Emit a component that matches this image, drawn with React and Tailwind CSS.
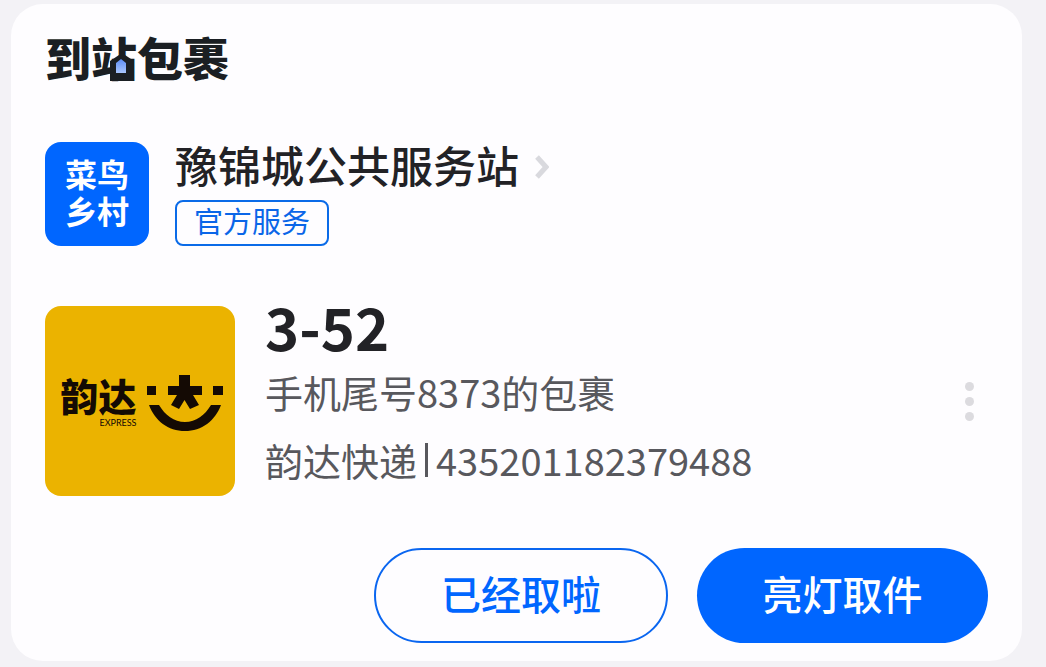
import React from 'react'

const parcel = {
  code: '3-52',
  note: '手机尾号8373的包裹',
  courier: '韵达快递',
  tracking: '435201182379488',
}

function HouseMark() {
  return (
    <svg viewBox="0 0 24 27" className="absolute left-[65px] top-[22px] w-6 h-[27px]" aria-hidden="true">
      <path d="M0 7 L9 1 H15 L24 7 V27 H0 Z" fill="#1b1f23" />
      <path d="M6 9 L11 5 L16 9 V19 H6 Z" fill="url(#window)" />
      <defs>
        <linearGradient id="window" x1="0" y1="0" x2="0" y2="1">
          <stop offset="0" stopColor="#5c8cf5" />
          <stop offset="1" stopColor="#a9c6fd" />
        </linearGradient>
      </defs>
    </svg>
  )
}

function StationLogo() {
  return (
    <div className="w-[104px] h-[104px] shrink-0 rounded-2xl bg-[#0066ff] text-white pb-1
      flex items-center justify-center">
      <p className="text-[32px] leading-[37px] font-bold">菜鸟<br />乡村</p>
    </div>
  )
}

function CourierLogo() {
  return (
    <div className="w-[190px] h-[190px] shrink-0 rounded-2xl bg-[#ebb300] text-[#140a04] pl-1 pt-1
      flex items-center justify-center gap-[9px]">
      <div className="flex flex-col items-end">
        <span className="text-[38px] leading-[36px] font-black">韵达</span>
        <span className="mt-1 font-['Lato'] text-[9px] leading-3">EXPRESS</span>
      </div>
      <svg viewBox="0 0 78 58" className="w-[78px] h-[58px]" fill="currentColor" aria-hidden="true">
        <rect x="1" y="12" width="9" height="9" />
        <rect x="67" y="12" width="10" height="9" />
        <path d="M33 1 H44 V12 H56 V21 H47 L53 31 L44 35 L38.500 26 L33 35 L25 31 L31 21 H22 V12 H33 Z" />
        <path d="M3 31 H13 C19 41 28 48 39 48 C50 48 59 41 65 31 H75 C69 47 56 57 39 57 C22 57 9 47 3 31 Z" />
      </svg>
    </div>
  )
}

export default function App() {
  return (
    <div className="min-h-screen bg-[#f3f2f6] pt-1 pr-6 pb-[7px] pl-[11px] font-['Noto_Sans_CJK_SC',sans-serif]">
      <main className="rounded-[32px] bg-[#fefdff] px-[34px] pt-7 pb-[18px] text-[#222226]">
        {/* Title */}
        <h1 className="relative w-fit text-[46px] leading-[48px] font-black text-[#1b1f23]">
          到站包裹
          <HouseMark />
        </h1>

        {/* Station */}
        <section className="mt-[62px] flex gap-[26px]">
          <StationLogo />
          <div className="flex flex-col items-start gap-[14px]">
            <a href="#station" className="flex items-center gap-4 text-[43px] leading-[44px] font-medium">
              豫锦城公共服务站
              <svg viewBox="0 0 14 24" className="mt-1.5 w-[14px] h-6" fill="none" stroke="#d9d9de" strokeWidth="5" aria-hidden="true">
                <path d="M2 2 L11 12 L2 22" />
              </svg>
            </a>
            <span className="h-[46px] rounded-lg border-2 border-[#0a6be8] px-[17px] text-[29px] leading-9 text-[#0a66e8]">
              官方服务
            </span>
          </div>
        </section>

        {/* Parcel */}
        <section className="mt-[60px] flex gap-[30px]">
          <CourierLogo />
          <div className="flex-1 text-[38px] leading-[68px] text-[#58585d]">
            <h2 className="mb-3 text-[58px] leading-10 font-bold text-[#222226]">{parcel.code}</h2>
            <p>{parcel.note}</p>
            <p className="flex items-center">
              {parcel.courier}
              <span className="mx-2 h-[34px] w-[3px] bg-[#58585d]" />
              {parcel.tracking}
            </p>
          </div>
          <button aria-label="更多" className="flex w-[38px] flex-col items-center justify-center gap-[6px]">
            <span className="h-[9px] w-[9px] rounded-full bg-[#dcdbdf]" />
            <span className="h-[9px] w-[9px] rounded-full bg-[#dcdbdf]" />
            <span className="h-[9px] w-[9px] rounded-full bg-[#dcdbdf]" />
          </button>
        </section>

        {/* Actions */}
        <div className="mt-[52px] flex justify-end gap-[29px] text-[40px] leading-[48px] font-medium">
          <button className="h-[95px] w-[294px] rounded-full border-2 border-[#0a66f0] pb-1.5 text-[#0066ff]">已经取啦</button>
          <button className="h-[95px] w-[291px] rounded-full bg-[#0066ff] pb-1.5 text-white">亮灯取件</button>
        </div>
      </main>
    </div>
  )
}
